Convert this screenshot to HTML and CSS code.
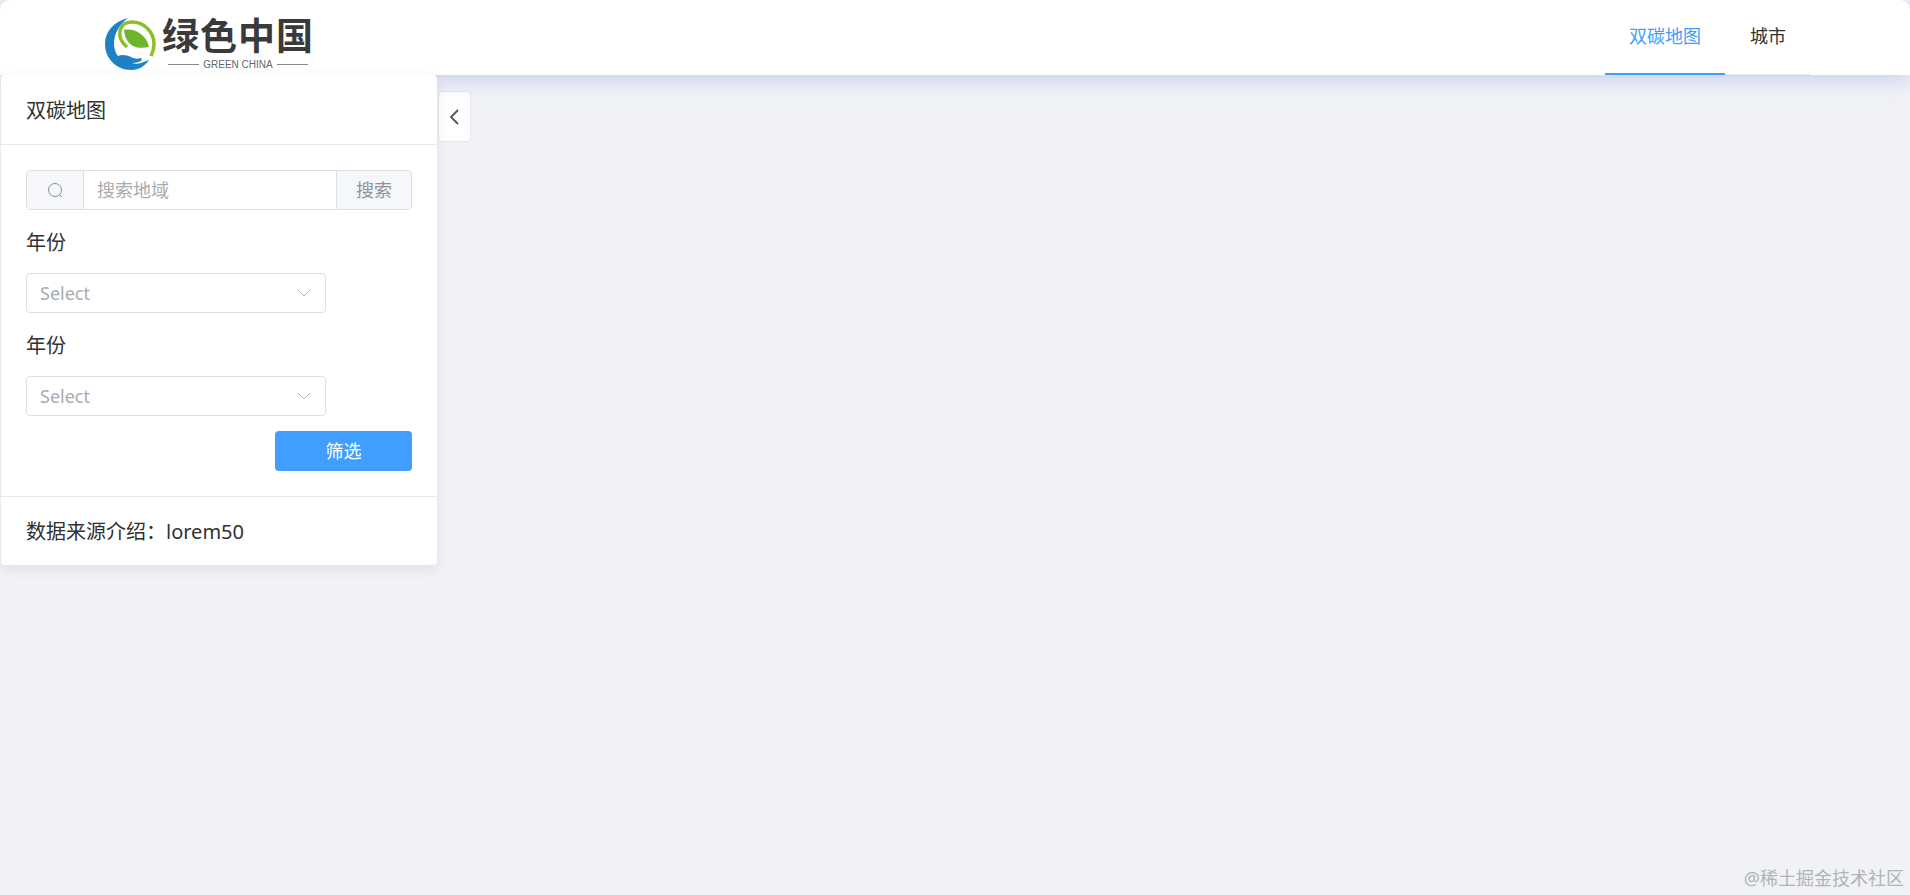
FILE: index.html

```html
<!DOCTYPE html>
<html lang="zh-CN">
<head>
    <meta charset="UTF-8">
    <title>绿色中国</title>
    <link rel="stylesheet" href="styles.css">
</head>
<body>

<!-- Encabezado -->
    <header class="top-bar">
        <div class="logo">
            <svg class="logo-mark" width="52" height="54" viewBox="0 0 52 54">
                <path d="M23 1C8 5 0 15 0 27c0 15 12 26 26 26 8 0 14-4 18-10l-8 3c-3 1-6 1-9 0 4 0 8-1 10-3l-1-2c-3 1-7 1-10-1-4-2-9-3-13-1C6 30 8 12 23 1z" fill="#1c82c4"/>
                <path d="M46 39c2-4 3-8 3-12C49 15 39 5 27 5c-6 0-11 3-12 9-1 6 2 12 7 16" fill="none" stroke="#8cbf26" stroke-width="3.500"/>
                <path d="M19 13c10-2 22 4 25 17-9 2-23 2-25-17z" fill="#6cb52d"/>
            </svg>
            <div class="logo-text">
                <span class="logo-title">绿色中国</span>
                <span class="logo-sub">GREEN CHINA</span>
            </div>
        </div>
        <nav class="tabs">
            <a class="tab tab-active">双碳地图</a>
            <a class="tab">城市</a>
        </nav>
    </header>

    <main class="content">
        <section class="panel">
            <div class="panel-head">双碳地图</div>
            <div class="panel-body">
                <div class="search">
                    <span class="search-icon">
                        <svg width="17" height="17" viewBox="0 0 17 17" fill="none" stroke="#8b9098" stroke-width="1">
                            <circle cx="8" cy="8" r="6.500"/>
                            <path d="M12.500 12.500l2.500 2.500"/>
                        </svg>
                    </span>
                    <span class="search-input">搜索地域</span>
                    <span class="search-btn">搜索</span>
                </div>

                <label class="field-label">年份</label>
                <div class="select">
                    <span>Select</span>
                    <svg width="14" height="8" viewBox="0 0 14 8" fill="none" stroke="#b4b7bd" stroke-width="1"><path d="M1 1l6 6 6-6"/></svg>
                </div>

                <label class="field-label">年份</label>
                <div class="select">
                    <span>Select</span>
                    <svg width="14" height="8" viewBox="0 0 14 8" fill="none" stroke="#b4b7bd" stroke-width="1"><path d="M1 1l6 6 6-6"/></svg>
                </div>

                <div class="actions">
                    <button class="filter-btn">筛选</button>
                </div>
            </div>
            <div class="panel-foot">数据来源介绍：lorem50</div>
        </section>

        <button class="collapse-btn">
            <svg width="10" height="16" viewBox="0 0 10 16" fill="none" stroke="#555" stroke-width="1.800"><path d="M9 1L2 8l7 7"/></svg>
        </button>
    </main>

    <div class="watermark">@稀土掘金技术社区</div>

</body>
</html>
```

FILE: styles.css

```css
/* Estilos generales */
html, body {
    height: 100%;
}

body {
    position: relative;
    margin: 0;
    display: flex;
    flex-direction: column;
    overflow: hidden;
    background: #f0f2f6;
    color: #303133;
    font-family: "Noto Sans", "Noto Sans CJK SC", sans-serif;
    font-size: 18px;
}

/* Encabezado */
.top-bar {
    position: relative;
    z-index: 1;
    flex: none;
    height: 75px;
    display: flex;
    justify-content: space-between;
    padding: 0 100px 0 105px;
    box-sizing: border-box;
    background: #fff;
    border-radius: 10px 10px 0 0;
    box-shadow: 0 4px 22px rgba(90, 110, 220, 0.28);
}

.logo {
    display: flex;
    align-items: flex-start;
    gap: 5px;
    padding-top: 17px;
}

.logo-mark {
    flex: none;
}

.logo-text {
    display: flex;
    flex-direction: column;
    align-items: center;
    margin-top: 2px;
    font-family: "Liberation Sans", "Noto Sans CJK SC", sans-serif;
}

.logo-title {
    font-size: 37px;
    line-height: 38px;
    font-weight: bold;
    letter-spacing: 1px;
    color: #3a3a3a;
}

.logo-sub {
    display: flex;
    align-items: center;
    gap: 4px;
    width: 140px;
    font-size: 10px;
    line-height: 15px;
    white-space: nowrap;
    color: #666;
}

.logo-sub::before, .logo-sub::after {
    content: "";
    flex: 1;
    height: 1px;
    background: #888;
}

.tabs {
    display: flex;
    border-bottom: 1px solid #e4e7ed;
    height: 75px;
    box-sizing: border-box;
}

.tab {
    width: 120px;
    line-height: 73px;
    text-align: center;
    color: #303133;
}

.tab + .tab {
    width: 85px;
    padding-left: 25px;
    box-sizing: border-box;
    text-align: left;
}

.tab-active {
    color: #409eff;
    height: 75px;
    box-sizing: border-box;
    border-bottom: 2px solid #409eff;
}

/* Panel lateral */
.content {
    display: flex;
    align-items: flex-start;
    gap: 1px;
    padding: 0 0 0 1px;
}

.panel {
    position: relative;
    z-index: 2;
    width: 436px;
    background: #fff;
    border-radius: 4px;
    box-shadow: 0 4px 14px rgba(0, 0, 0, 0.08);
}

.panel-head {
    height: 70px;
    box-sizing: border-box;
    padding: 0 25px;
    line-height: 72px;
    font-size: 20px;
    border-bottom: 1px solid #e4e7ed;
}

.panel-body {
    padding: 25px;
    border-bottom: 1px solid #e4e7ed;
}

.search {
    display: flex;
    height: 40px;
    box-sizing: border-box;
    border: 1px solid #dcdfe6;
    border-radius: 4px;
    overflow: hidden;
    width: 386px;
}

.search-icon {
    width: 56px;
    display: flex;
    align-items: center;
    justify-content: center;
    background: #f5f7fa;
    border-right: 1px solid #dcdfe6;
}

.search-input {
    flex: 1;
    padding: 0 13px;
    line-height: 38px;
    color: #a8abb2;
}

.search-btn {
    width: 74px;
    line-height: 38px;
    text-align: center;
    background: #f5f7fa;
    border-left: 1px solid #dcdfe6;
    color: #909399;
}

.field-label {
    display: block;
    margin: 14px 0 13px;
    line-height: 38px;
    height: 36px;
    font-size: 20px;
}

.select {
    display: flex;
    align-items: center;
    justify-content: space-between;
    width: 300px;
    height: 40px;
    box-sizing: border-box;
    padding: 0 14px 0 13px;
    border: 1px solid #dcdfe6;
    border-radius: 4px;
    color: #a8abb2;
}

.actions {
    display: flex;
    justify-content: flex-end;
    margin-top: 15px;
}

.filter-btn {
    width: 137px;
    height: 40px;
    padding: 0 0 2px;
    border: none;
    border-radius: 4px;
    background: #409eff;
    color: #fff;
    font-family: inherit;
    font-size: 18px;
}

.panel-foot {
    height: 68px;
    padding: 0 25px;
    line-height: 70px;
    font-size: 20px;
    color: #303133;
}

.collapse-btn {
    flex: none;
    display: flex;
    align-items: center;
    justify-content: center;
    width: 33px;
    height: 51px;
    margin-top: 16px;
    padding: 0 1px 0 0;
    background: #fff;
    border: 1px solid #e4e7ed;
    border-radius: 4px;
}

/* Marca de agua */
.watermark {
    position: absolute;
    right: 6px;
    bottom: 5px;
    font-size: 18px;
    color: #b0b3b8;
}
```
